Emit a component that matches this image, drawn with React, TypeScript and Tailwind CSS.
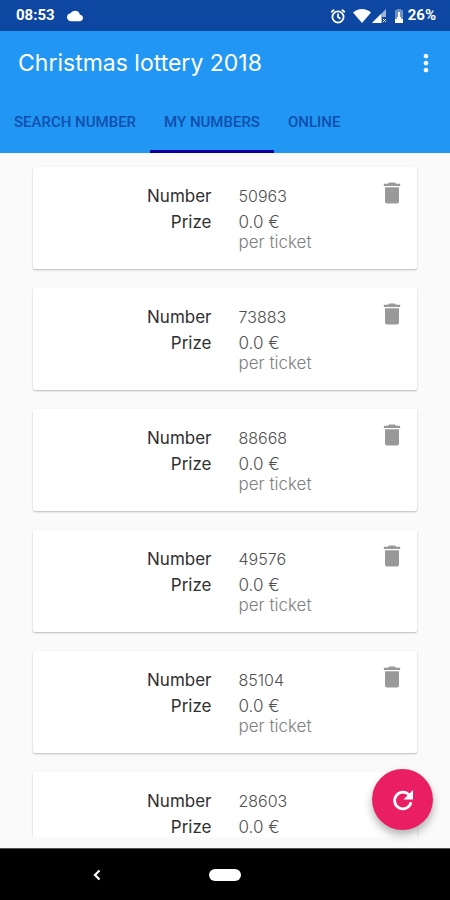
import { useState } from "react";
import { MdCloud, MdDelete, MdMoreVert } from "react-icons/md";

type Ticket = {
  number: string;
  prize: string;
  note?: string;
};

const initialTickets: Ticket[] = [
  { number: "50963", prize: "0.0 €", note: "per ticket" },
  { number: "73883", prize: "0.0 €", note: "per ticket" },
  { number: "88668", prize: "0.0 €", note: "per ticket" },
  { number: "49576", prize: "0.0 €", note: "per ticket" },
  { number: "85104", prize: "0.0 €", note: "per ticket" },
  { number: "28603", prize: "0.0 €" },
];

const tabs = ["SEARCH NUMBER", "MY NUMBERS", "ONLINE"];

function StatusBar() {
  return (
    <div className="flex h-[31px] shrink-0 items-center bg-[#0d47a1] pr-[14px] pl-4 font-['Roboto',sans-serif] text-[15px] font-bold text-white">
      <span>08:53</span>
      <MdCloud className="ml-3 size-4" />
      <div className="ml-auto flex items-center">
        <svg
          className="size-4"
          viewBox="0 0 16 16"
          fill="none"
          stroke="currentColor"
          strokeWidth="1.8"
        >
          <circle cx="8" cy="9" r="5.600" />
          <path d="M8 5.500V9l2.500 1.800M1.200 4.200l3-2.600M14.800 4.200l-3-2.600" />
        </svg>
        <svg className="ml-[7px] h-4 w-[18px]" viewBox="0 0 18 16" fill="currentColor">
          <path d="M9 15 0 4.500C2.500 2.200 5.500 1 9 1s6.500 1.200 9 3.500z" />
        </svg>
        <svg className="ml-px h-4 w-[15px]" viewBox="0 0 15 16" fill="currentColor">
          <path d="M0 15 14 1v8h-4v6z" opacity=".6" />
          <path d="M0 15 9 6v9z" />
          <path d="m11 11 3 3m0-3-3 3" stroke="currentColor" />
        </svg>
        <svg className="ml-[7px] h-4 w-[10px]" viewBox="0 0 10 16" fill="currentColor">
          <path d="M3 1h4v1h2v9H1V2h2z" opacity=".4" />
          <path d="M4 4h2v5h1v2h2v4H1v-4h2V9h1z" />
        </svg>
        <span className="ml-1">26%</span>
      </div>
    </div>
  );
}

function TicketCard({ ticket, onDelete }: { ticket: Ticket; onDelete: () => void }) {
  return (
    <li className="relative rounded-[2px] bg-white pt-[19px] pb-[17px] shadow-[0_1px_2px_rgba(0,0,0,0.26)]">
      <dl className="grid grid-cols-2 gap-x-[27px] text-[17px] leading-5">
        <dt className="mb-[6px] text-right text-[#303030]">Number</dt>
        <dd className="mb-[6px] text-base leading-5 font-light text-[#505050]">
          {ticket.number}
        </dd>
        <dt className="text-right text-[#303030]">Prize</dt>
        <dd className="font-light text-[#505050]">
          {ticket.prize}
          {ticket.note && <span className="block text-[#808080]">{ticket.note}</span>}
        </dd>
      </dl>
      <button
        className="absolute top-3 right-[11px] text-[#999999]"
        aria-label={`Delete ${ticket.number}`}
        onClick={onDelete}
      >
        <MdDelete className="size-7" />
      </button>
    </li>
  );
}

export default function App() {
  const [tickets, setTickets] = useState<Ticket[]>(initialTickets);
  const [activeTab, setActiveTab] = useState("MY NUMBERS");

  return (
    <div className="flex h-dvh flex-col bg-[#fafafa] font-['Inter',sans-serif]">
      <StatusBar />

      <header className="shrink-0 bg-[#2196f3]">
        <div className="flex h-[63px] items-center justify-between pr-[10px] pl-[18px] text-white">
          <h1 className="text-[23px] leading-7">Christmas lottery 2018</h1>
          <button aria-label="More options">
            <MdMoreVert className="size-7" />
          </button>
        </div>
        <nav className="flex h-[59px] font-['Roboto',sans-serif] text-[15px] font-medium text-[#104fae]">
          {tabs.map((tab) => (
            <button
              key={tab}
              onClick={() => setActiveTab(tab)}
              className={`border-y-3 border-t-transparent px-[14px] pb-[2px] ${
                activeTab === tab ? "border-b-[#0000a0]" : "border-b-transparent"
              }`}
            >
              {tab}
            </button>
          ))}
        </nav>
      </header>

      <main className="relative min-h-0 flex-1 pb-[11px]">
        <ul className="flex h-full flex-col gap-[19px] overflow-y-auto px-[33px] pt-[14px] [scrollbar-width:none]">
          {tickets.map((ticket) => (
            <TicketCard
              key={ticket.number}
              ticket={ticket}
              onDelete={() =>
                setTickets(tickets.filter((t) => t.number !== ticket.number))
              }
            />
          ))}
        </ul>
        <button
          className="absolute right-[17px] bottom-[18px] flex size-[61px] items-center justify-center rounded-full bg-[#e91e63] text-white shadow-[0_5px_9px_rgba(0,0,0,0.3)]"
          aria-label="Refresh"
          onClick={() => setTickets(initialTickets)}
        >
          <svg className="size-6" viewBox="0 0 24 24" fill="none">
            <path
              d="M18.500 7.500A8.300 8.300 0 1 0 20 14.300"
              stroke="currentColor"
              strokeWidth="2.800"
            />
            <path d="M22 2v9.500h-9.500z" fill="currentColor" />
          </svg>
        </button>
      </main>

      <div className="grid h-[52px] shrink-0 grid-cols-[1fr_32px_1fr] items-center border-t border-[#555555] bg-black text-white">
        <button className="mr-4 justify-self-center" aria-label="Back">
          <svg
            className="size-4"
            viewBox="0 0 16 16"
            fill="none"
            stroke="currentColor"
            strokeWidth="2.200"
          >
            <path d="m10.500 3.500-4.500 4.500 4.500 4.500" />
          </svg>
        </button>
        <button className="h-3 rounded-full bg-white" aria-label="Home" />
      </div>
    </div>
  );
}
